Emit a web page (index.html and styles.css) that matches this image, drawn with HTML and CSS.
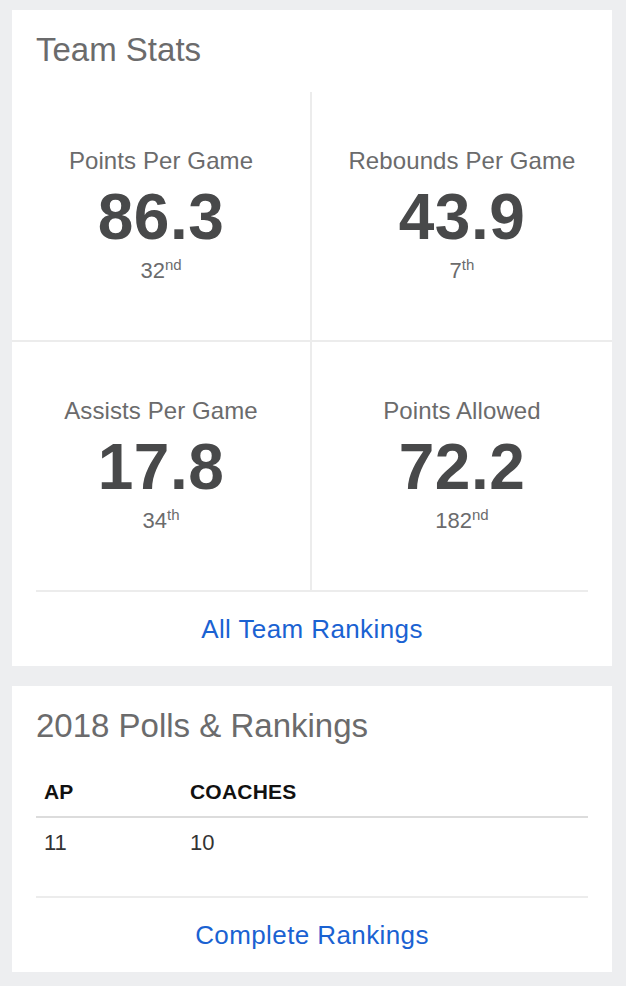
FILE: index.html
```html
<!DOCTYPE html>
<html lang="en">
<head>
<meta charset="utf-8">
<title>Team Stats</title>
<link rel="stylesheet" href="styles.css">
</head>
<body>
<section class="card">
  <h2 class="card-title">Team Stats</h2>
  <div class="stats-grid">
    <div class="stat stat-left stat-top">
      <div class="stat-label">Points Per Game</div>
      <div class="stat-value">86.3</div>
      <div class="stat-rank">32<sup>nd</sup></div>
    </div>
    <div class="stat stat-top">
      <div class="stat-label">Rebounds Per Game</div>
      <div class="stat-value">43.9</div>
      <div class="stat-rank">7<sup>th</sup></div>
    </div>
    <div class="stat stat-left">
      <div class="stat-label">Assists Per Game</div>
      <div class="stat-value">17.8</div>
      <div class="stat-rank">34<sup>th</sup></div>
    </div>
    <div class="stat">
      <div class="stat-label">Points Allowed</div>
      <div class="stat-value">72.2</div>
      <div class="stat-rank">182<sup>nd</sup></div>
    </div>
  </div>
  <div class="card-footer"><a class="footer-link" href="#">All Team Rankings</a></div>
</section>

<section class="card">
  <h2 class="card-title">2018 Polls &amp; Rankings</h2>
  <div class="polls">
    <div class="polls-row polls-head">
      <div class="polls-cell">AP</div>
      <div class="polls-cell">COACHES</div>
    </div>
    <div class="polls-row polls-body">
      <div class="polls-cell">11</div>
      <div class="polls-cell">10</div>
    </div>
  </div>
  <div class="card-footer"><a class="footer-link" href="#">Complete Rankings</a></div>
</section>
</body>
</html>
```

FILE: styles.css
```css
* { box-sizing: border-box; }

html, body {
  margin: 0;
  padding: 0;
}

body {
  background: #edeef0;
  font-family: "Liberation Sans", Arial, sans-serif;
  padding: 10px 14px 14px 12px;
  display: flex;
  flex-direction: column;
  align-items: flex-start;
  gap: 20px;
}

.card {
  background: #ffffff;
  width: 600px;
  padding-top: 20px;
}

.card-title {
  margin: 0;
  padding: 0 24px;
  font-size: 33px;
  line-height: 40px;
  font-weight: 400;
  color: #6b6b6c;
}

.stats-grid {
  margin-top: 22px;
  display: grid;
  grid-template-columns: 1fr 1fr;
}

.stat {
  height: 248px;
  display: flex;
  flex-direction: column;
  align-items: center;
  justify-content: center;
  text-align: center;
}

.stat-left { border-right: 2px solid #ececec; }
.stat-top { border-bottom: 2px solid #ececec; height: 250px; }

.stat-label {
  font-size: 24px;
  line-height: 28px;
  color: #6b6b6c;
  letter-spacing: 0.1px;
}

.stat-value {
  margin-top: 10px;
  font-size: 64px;
  line-height: 64px;
  font-weight: 700;
  color: #48494a;
  letter-spacing: 0.5px;
}

.stat-rank {
  margin-top: 8px;
  font-size: 22px;
  line-height: 28px;
  color: #6b6b6c;
}

.stat-rank sup {
  font-size: 15px;
  line-height: 0;
  vertical-align: baseline;
  position: relative;
  top: -8px;
}

.card-footer {
  margin: 0 24px;
  border-top: 2px solid #ececec;
  padding: 22px 0 22px;
  text-align: center;
  font-size: 26px;
  line-height: 30px;
  height: 76px;
}

.footer-link {
  font-size: 26px;
  letter-spacing: 0.4px;
  color: #1a62d2;
  text-decoration: none;
}

.polls {
  margin: 34px 24px 0;
}

.polls-row {
  display: grid;
  grid-template-columns: 146px 1fr;
}

.polls-cell {
  padding-left: 8px;
}

.polls-head {
  font-size: 21px;
  line-height: 24px;
  font-weight: 700;
  color: #111111;
  padding-bottom: 12px;
  border-bottom: 2px solid #dcdcdc;
  letter-spacing: 0.2px;
}

.polls-body {
  font-size: 22px;
  line-height: 26px;
  color: #333333;
  padding-top: 12px;
  padding-bottom: 39px;
  height: 78px;
}
```
